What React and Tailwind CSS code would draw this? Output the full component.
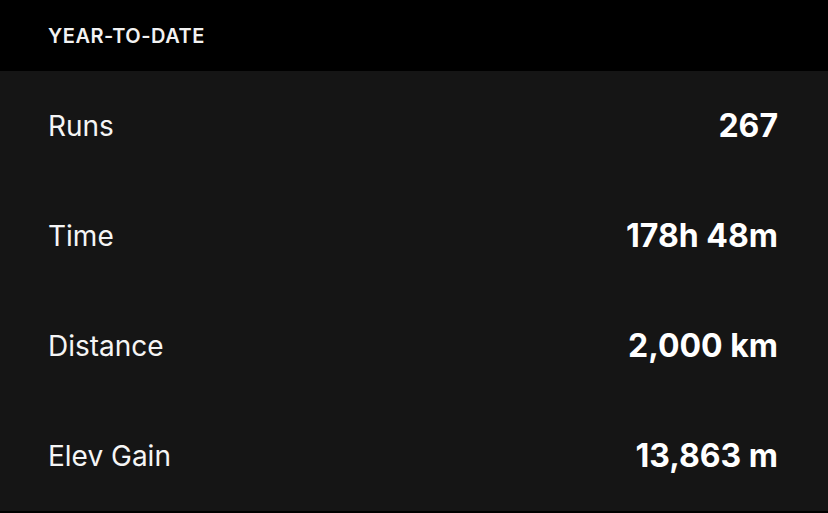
import React from 'react';

const stats = [
  { label: 'Runs', value: '267' },
  { label: 'Time', value: '178h 48m' },
  { label: 'Distance', value: '2,000 km' },
  { label: 'Elev Gain', value: '13,863 m' },
];

const App = () => {
  return (
    <div className="w-[828px] h-[513px] bg-black font-['Inter',sans-serif] text-white">
      <div className="h-[71px] flex items-center pl-[48px]">
        <h2 className="text-[20px] font-semibold tracking-[0.5px] text-[#f2f2f2]">YEAR-TO-DATE</h2>
      </div>
      <div className="bg-[#151515]">
        {stats.map((s) => (
          <div key={s.label} className="h-[110px] flex items-center justify-between pl-[48px] pr-[50px]">
            <span className="text-[28px] font-normal text-[#f5f5f5]">{s.label}</span>
            <span className="text-[32px] font-bold">{s.value}</span>
          </div>
        ))}
      </div>
    </div>
  );
};

export default App;
